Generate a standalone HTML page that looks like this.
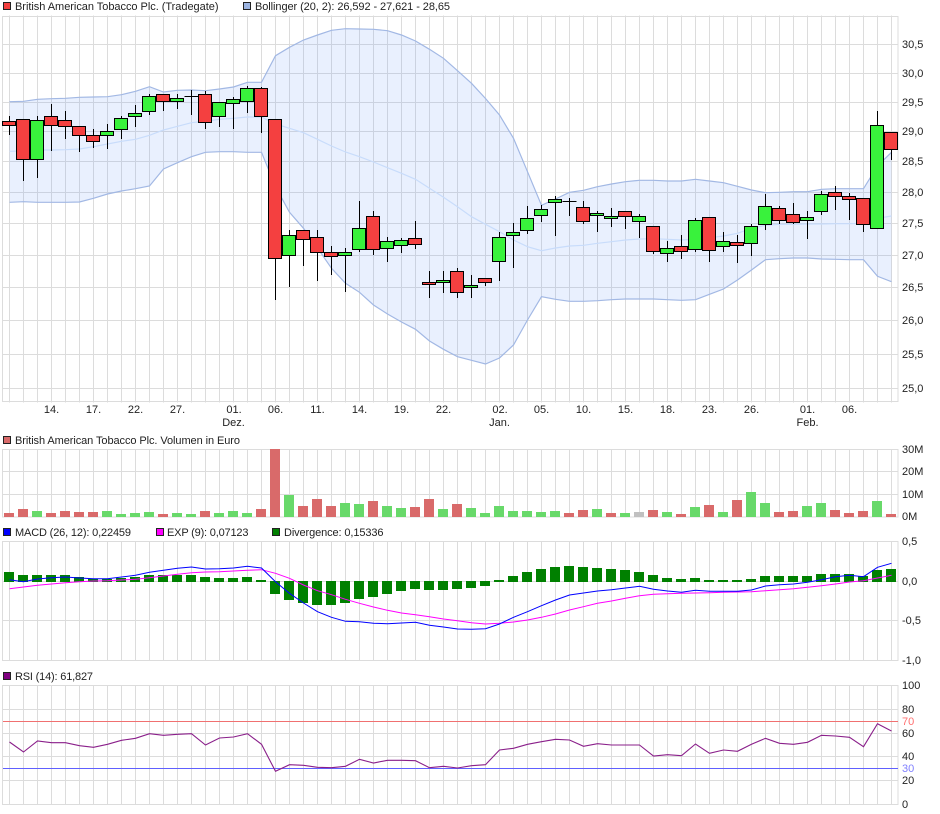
<!DOCTYPE html>
<html><head><meta charset="utf-8"><title>Chart</title>
<style>
html,body{margin:0;padding:0;background:#fff}
svg{display:block}
text{font-family:"Liberation Sans",sans-serif;font-size:11px;fill:#222}
.g{stroke:#dcdcdc;stroke-width:1;fill:none}
.m{text-anchor:middle}
</style></head><body>
<svg width="940" height="814" viewBox="0 0 940 814" xmlns="http://www.w3.org/2000/svg">
<!-- main grid -->
<line x1="9" y1="209" x2="892" y2="209" stroke="#dcdcdc" stroke-width="387" stroke-dasharray="1 13"/>
<rect class="g" x="2.5" y="16.5" width="895.5" height="385"/>
<path class="g" d="M3 44.5H898M3 73.5H898M3 102.5H898M3 131.5H898M3 161.5H898M3 192.5H898M3 223.5H898M3 255.5H898M3 287.5H898M3 320.5H898M3 354.5H898M3 388.5H898"/>
<!-- bollinger -->
<polygon fill="rgb(100,150,250)" fill-opacity=".14" points="9.5,101.7 23.5,101.3 37.5,99.3 51.5,98.7 65.5,98.3 79.5,97.3 93.5,97 107.5,96.7 121.5,94.7 135.5,91.3 149.5,86.7 163.5,92 177.5,90.3 191.5,90 205.5,90.7 219.5,89 233.5,87 247.5,82.3 261.5,82.3 275.5,55.7 289.5,47.3 303.5,40 317.5,35 331.5,30.3 345.5,28.7 359.5,29 373.5,29.3 387.5,30.7 401.5,35 415.5,41 429.5,49.3 443.5,58.3 457.5,70.7 471.5,83.3 485.5,98.5 499.5,115 513.5,138.3 527.5,171.7 541.5,205.3 555.5,199 569.5,192.3 583.5,190.3 597.5,186.7 611.5,184 625.5,181.7 639.5,180.3 653.5,180.3 667.5,181 681.5,181 695.5,179.3 709.5,181 723.5,182.7 737.5,186.3 751.5,190 765.5,192.7 779.5,192.3 793.5,191.7 807.5,191.7 821.5,189.3 835.5,188.7 849.5,188.7 863.5,188.7 877.5,166 891.5,152.3 891.5,281.7 877.5,276.3 863.5,259.7 849.5,259.7 835.5,259.3 821.5,259 807.5,258 793.5,258 779.5,258.7 765.5,259.7 751.5,270 737.5,280 723.5,289 709.5,294.3 695.5,299.7 681.5,300.3 667.5,299.7 653.5,299 639.5,299 625.5,299 611.5,299.7 597.5,300.7 583.5,301.3 569.5,301.3 555.5,299.3 541.5,296.7 527.5,320 513.5,345 499.5,358 485.5,364 471.5,360.3 457.5,356.7 443.5,349.3 429.5,341 415.5,329.3 401.5,322 387.5,314 373.5,305 359.5,292.3 345.5,283.3 331.5,268.3 317.5,248 303.5,228.3 289.5,212.3 275.5,186.7 261.5,152.3 247.5,152.3 233.5,151.7 219.5,151.7 205.5,152.3 191.5,156.7 177.5,162.7 163.5,169 149.5,186 135.5,188.7 121.5,191 107.5,194 93.5,198.3 79.5,202 65.5,202.3 51.5,202.3 37.5,202.3 23.5,201.7 9.5,202.3"/>
<polyline fill="none" stroke="#c8dcfb" stroke-width="1.2" points="9.5,151.3 23.5,151 37.5,150 51.5,150 65.5,149.7 79.5,149 93.5,146.7 107.5,144 121.5,141.3 135.5,139.3 149.5,135.3 163.5,130 177.5,126.3 191.5,122.7 205.5,121.3 219.5,119.3 233.5,118.3 247.5,117 261.5,117 275.5,124 289.5,128.3 303.5,132.7 317.5,139.3 331.5,146 345.5,152 359.5,156.7 373.5,162 387.5,167.7 401.5,173.3 415.5,179.3 429.5,188.3 443.5,197.3 457.5,206.7 471.5,216.7 485.5,224.3 499.5,231.7 513.5,240 527.5,246.7 541.5,250.7 555.5,248 569.5,246 583.5,245.3 597.5,243.3 611.5,241.7 625.5,240 639.5,239 653.5,238.7 667.5,239.3 681.5,240 695.5,239.3 709.5,237.7 723.5,236 737.5,233.3 751.5,228.3 765.5,225.3 779.5,224.3 793.5,224.3 807.5,224 821.5,224 835.5,223.7 849.5,223.7 863.5,223.3 877.5,218.3 891.5,216"/>
<polyline fill="none" stroke="#a2b8e4" stroke-width="1.2" points="9.5,101.7 23.5,101.3 37.5,99.3 51.5,98.7 65.5,98.3 79.5,97.3 93.5,97 107.5,96.7 121.5,94.7 135.5,91.3 149.5,86.7 163.5,92 177.5,90.3 191.5,90 205.5,90.7 219.5,89 233.5,87 247.5,82.3 261.5,82.3 275.5,55.7 289.5,47.3 303.5,40 317.5,35 331.5,30.3 345.5,28.7 359.5,29 373.5,29.3 387.5,30.7 401.5,35 415.5,41 429.5,49.3 443.5,58.3 457.5,70.7 471.5,83.3 485.5,98.5 499.5,115 513.5,138.3 527.5,171.7 541.5,205.3 555.5,199 569.5,192.3 583.5,190.3 597.5,186.7 611.5,184 625.5,181.7 639.5,180.3 653.5,180.3 667.5,181 681.5,181 695.5,179.3 709.5,181 723.5,182.7 737.5,186.3 751.5,190 765.5,192.7 779.5,192.3 793.5,191.7 807.5,191.7 821.5,189.3 835.5,188.7 849.5,188.7 863.5,188.7 877.5,166 891.5,152.3"/>
<polyline fill="none" stroke="#a2b8e4" stroke-width="1.2" points="9.5,202.3 23.5,201.7 37.5,202.3 51.5,202.3 65.5,202.3 79.5,202 93.5,198.3 107.5,194 121.5,191 135.5,188.7 149.5,186 163.5,169 177.5,162.7 191.5,156.7 205.5,152.3 219.5,151.7 233.5,151.7 247.5,152.3 261.5,152.3 275.5,186.7 289.5,212.3 303.5,228.3 317.5,248 331.5,268.3 345.5,283.3 359.5,292.3 373.5,305 387.5,314 401.5,322 415.5,329.3 429.5,341 443.5,349.3 457.5,356.7 471.5,360.3 485.5,364 499.5,358 513.5,345 527.5,320 541.5,296.7 555.5,299.3 569.5,301.3 583.5,301.3 597.5,300.7 611.5,299.7 625.5,299 639.5,299 653.5,299 667.5,299.7 681.5,300.3 695.5,299.7 709.5,294.3 723.5,289 737.5,280 751.5,270 765.5,259.7 779.5,258.7 793.5,258 807.5,258 821.5,259 835.5,259.3 849.5,259.7 863.5,259.7 877.5,276.3 891.5,281.7"/>
<!-- wicks -->
<path fill="none" stroke="#000" stroke-width="1" d="M9.5 116V135M23.5 119V181M37.5 116V178M51.5 104V151M65.5 111V139M79.5 127V152M93.5 129V148M107.5 124V149M121.5 116V139M135.5 105V127M149.5 94V115M163.5 94V111M177.5 94V109M191.5 90V115M205.5 91V129M219.5 102V127M233.5 97V129M247.5 86V113M261.5 87V133M275.5 119V300M289.5 230V287M303.5 230V266M317.5 230V281M331.5 246V275M345.5 248V292M359.5 201V252M373.5 211V255M387.5 237V262M401.5 238V253M415.5 221V249M429.5 271V298M443.5 271V293M457.5 268V298M471.5 275V298M485.5 278V286M499.5 232V281M513.5 223V268M527.5 206V234M541.5 205V222M555.5 196V236M569.5 198V216M583.5 201V224M597.5 211V232M611.5 208V227M625.5 211V229M639.5 214V238M653.5 226V254M667.5 241V262M681.5 235V259M695.5 218V252M709.5 217V262M723.5 232V252M737.5 235V263M751.5 224V256M765.5 194V230M779.5 206V224M793.5 203V224M807.5 211V239M821.5 191V215M835.5 186V210M849.5 193V220M863.5 198V232M877.5 111V228M891.5 132V160M184.5 96.5H198.5M562.5 201.5H576.5"/>
<!-- red bodies -->
<path fill="#f44040" stroke="#000" stroke-width="1" d="M2.5 121.5h13v4h-13zM16.5 119.5h13v40h-13zM44.5 116.5h13v9h-13zM58.5 120.5h13v6h-13zM72.5 126.5h13v9h-13zM86.5 135.5h13v6h-13zM156.5 94.5h13v7h-13zM198.5 94.5h13v28h-13zM254.5 88.5h13v28h-13zM268.5 119.5h13v139h-13zM296.5 230.5h13v9h-13zM310.5 237.5h13v15h-13zM324.5 252.5h13v4h-13zM366.5 216.5h13v33h-13zM408.5 238.5h13v6h-13zM422.5 282.5h13v2h-13zM450.5 271.5h13v21h-13zM478.5 278.5h13v4h-13zM576.5 207.5h13v14h-13zM618.5 211.5h13v5h-13zM646.5 226.5h13v25h-13zM674.5 246.5h13v5h-13zM702.5 217.5h13v33h-13zM730.5 242.5h13v3h-13zM772.5 208.5h13v12h-13zM786.5 214.5h13v8h-13zM828.5 192.5h13v4h-13zM842.5 196.5h13v3h-13zM856.5 198.5h13v26h-13zM884.5 132.5h13v17h-13z"/>
<!-- green bodies -->
<path fill="#39f23c" stroke="#000" stroke-width="1" d="M30.5 120.5h13v39h-13zM100.5 131.5h13v4h-13zM114.5 118.5h13v11h-13zM128.5 113.5h13v3h-13zM142.5 96.5h13v15h-13zM170.5 98.5h13v3h-13zM212.5 102.5h13v14h-13zM226.5 99.5h13v4h-13zM240.5 88.5h13v13h-13zM282.5 235.5h13v20h-13zM338.5 252.5h13v3h-13zM352.5 228.5h13v21h-13zM380.5 241.5h13v7h-13zM394.5 240.5h13v5h-13zM436.5 280.5h13v2h-13zM464.5 285.5h13v2h-13zM492.5 237.5h13v24h-13zM506.5 232.5h13v3h-13zM520.5 218.5h13v12h-13zM534.5 209.5h13v6h-13zM548.5 199.5h13v3h-13zM590.5 213.5h13v2h-13zM604.5 216.5h13v2h-13zM632.5 216.5h13v5h-13zM660.5 248.5h13v5h-13zM688.5 220.5h13v29h-13zM716.5 241.5h13v5h-13zM744.5 226.5h13v17h-13zM758.5 206.5h13v18h-13zM800.5 217.5h13v3h-13zM814.5 194.5h13v17h-13zM870.5 125.5h13v103h-13z"/>
<!-- legends -->
<rect x="3.5" y="2.5" width="7" height="7" fill="#f44040" stroke="#222"/>
<text x="15" y="10" textLength="203.5" lengthAdjust="spacing">British American Tobacco Plc. (Tradegate)</text>
<rect x="243.5" y="2.5" width="7" height="7" fill="#9db5e2" stroke="#222"/>
<text x="255" y="10" textLength="195" lengthAdjust="spacing">Bollinger (20, 2): 26,592 - 27,621 - 28,65</text>
<rect x="3.5" y="436.5" width="7" height="7" fill="#d96a6a" stroke="#222"/>
<text x="15" y="444" textLength="225" lengthAdjust="spacing">British American Tobacco Plc. Volumen in Euro</text>
<rect x="3.5" y="528.5" width="7" height="7" fill="#0000ff" stroke="#222"/>
<text x="15" y="536" textLength="116" lengthAdjust="spacing">MACD (26, 12): 0,22459</text>
<rect x="156.5" y="528.5" width="7" height="7" fill="#ff00ff" stroke="#222"/>
<text x="167" y="536" textLength="81.5" lengthAdjust="spacing">EXP (9): 0,07123</text>
<rect x="272.5" y="528.5" width="7" height="7" fill="#008000" stroke="#222"/>
<text x="284" y="536" textLength="99.5" lengthAdjust="spacing">Divergence: 0,15336</text>
<rect x="3.5" y="672.5" width="7" height="7" fill="#800080" stroke="#222"/>
<text x="15" y="680" textLength="78" lengthAdjust="spacing">RSI (14): 61,827</text>
<!-- y axis main -->
<text x="902" y="48">30,5</text><text x="902" y="77">30,0</text><text x="902" y="106">29,5</text><text x="902" y="135">29,0</text><text x="902" y="165">28,5</text><text x="902" y="196">28,0</text><text x="902" y="227">27,5</text><text x="902" y="259">27,0</text><text x="902" y="291">26,5</text><text x="902" y="324">26,0</text><text x="902" y="358">25,5</text><text x="902" y="392">25,0</text>
<!-- x axis -->
<g class="m">
<text class="m" x="51.5" y="413">14.</text><text class="m" x="93.5" y="413">17.</text><text class="m" x="135.5" y="413">22.</text><text class="m" x="177.5" y="413">27.</text><text class="m" x="234" y="413">01.</text><text class="m" x="233.5" y="426">Dez.</text><text class="m" x="275.5" y="413">06.</text><text class="m" x="317.5" y="413">11.</text><text class="m" x="359.5" y="413">14.</text><text class="m" x="401.5" y="413">19.</text><text class="m" x="443.5" y="413">22.</text><text class="m" x="500" y="413">02.</text><text class="m" x="499.5" y="426">Jan.</text><text class="m" x="541.5" y="413">05.</text><text class="m" x="583.5" y="413">10.</text><text class="m" x="625.5" y="413">15.</text><text class="m" x="667.5" y="413">18.</text><text class="m" x="709.5" y="413">23.</text><text class="m" x="751.5" y="413">26.</text><text class="m" x="807.5" y="413">01.</text><text class="m" x="807.5" y="426">Feb.</text><text class="m" x="849.5" y="413">06.</text>
</g>
<!-- volume panel -->
<line x1="9" y1="483" x2="892" y2="483" stroke="#dcdcdc" stroke-width="68" stroke-dasharray="1 13"/>
<rect class="g" x="2.5" y="449.5" width="895.5" height="67.5"/>
<path class="g" d="M3 471.5H898M3 494.5H898"/>
<path fill="#d96a6a" d="M4 513h10V517h-10zM18 509h10V517h-10zM46 513h10V517h-10zM60 511h10V517h-10zM74 512h10V517h-10zM88 512h10V517h-10zM158 514h10V517h-10zM200 511h10V517h-10zM256 509h10V517h-10zM270 449h10V517h-10zM298 506h10V517h-10zM312 499h10V517h-10zM326 506h10V517h-10zM368 501h10V517h-10zM410 507h10V517h-10zM424 499h10V517h-10zM452 504h10V517h-10zM564 513h10V517h-10zM578 510h10V517h-10zM606 513h10V517h-10zM648 510h10V517h-10zM676 514h10V517h-10zM704 505h10V517h-10zM732 500h10V517h-10zM774 512h10V517h-10zM788 511h10V517h-10zM830 510h10V517h-10zM844 513h10V517h-10zM858 511h10V517h-10zM886 514h10V517h-10z"/>
<path fill="#68d96a" d="M32 511h10V517h-10zM102 511h10V517h-10zM116 514h10V517h-10zM130 513h10V517h-10zM144 512h10V517h-10zM172 513h10V517h-10zM186 514h10V517h-10zM214 513h10V517h-10zM228 511h10V517h-10zM242 513h10V517h-10zM284 495h10V517h-10zM340 503h10V517h-10zM354 504h10V517h-10zM382 506h10V517h-10zM396 508h10V517h-10zM438 509h10V517h-10zM466 508h10V517h-10zM480 513h10V517h-10zM494 506h10V517h-10zM508 511h10V517h-10zM522 511h10V517h-10zM536 512h10V517h-10zM550 511h10V517h-10zM592 509h10V517h-10zM620 513h10V517h-10zM662 512h10V517h-10zM690 507h10V517h-10zM718 512h10V517h-10zM746 492h10V517h-10zM760 503h10V517h-10zM802 506h10V517h-10zM816 503h10V517h-10zM872 501h10V517h-10z"/>
<rect x="634" y="512" width="10" height="5" fill="#c0c0c0"/>
<text x="902" y="453">30M</text><text x="902" y="475">20M</text><text x="902" y="498">10M</text><text x="902" y="520">0M</text>
<!-- macd panel -->
<line x1="9" y1="601" x2="892" y2="601" stroke="#dcdcdc" stroke-width="119" stroke-dasharray="1 13"/>
<rect class="g" x="2.5" y="541.5" width="895.5" height="119"/>
<path class="g" d="M3 581.5H898M3 620.5H898"/>
<path fill="#008000" d="M4 572h10V582h-10zM18 575h10V582h-10zM32 575h10V582h-10zM46 575h10V582h-10zM60 575h10V582h-10zM74 577h10V582h-10zM88 579h10V582h-10zM102 579h10V582h-10zM116 578h10V582h-10zM130 577h10V582h-10zM144 575h10V582h-10zM158 575h10V582h-10zM172 575h10V582h-10zM186 575h10V582h-10zM200 577h10V582h-10zM214 578h10V582h-10zM228 578h10V582h-10zM242 577h10V582h-10zM256 580h10V582h-10zM494 580h10V582h-10zM508 576h10V582h-10zM522 572h10V582h-10zM536 569h10V582h-10zM550 567h10V582h-10zM564 566h10V582h-10zM578 567h10V582h-10zM592 568h10V582h-10zM606 569h10V582h-10zM620 570h10V582h-10zM634 572h10V582h-10zM648 575h10V582h-10zM662 578h10V582h-10zM676 579h10V582h-10zM690 578h10V582h-10zM704 580h10V582h-10zM718 580h10V582h-10zM732 580h10V582h-10zM746 579h10V582h-10zM760 576h10V582h-10zM774 576h10V582h-10zM788 576h10V582h-10zM802 576h10V582h-10zM816 574h10V582h-10zM830 574h10V582h-10zM844 574h10V582h-10zM858 576h10V582h-10zM872 570h10V582h-10zM886 569h10V582h-10zM270 581h10V594h-10zM284 581h10V600h-10zM298 581h10V603h-10zM312 581h10V605h-10zM326 581h10V605h-10zM340 581h10V603h-10zM354 581h10V599h-10zM368 581h10V597h-10zM382 581h10V594h-10zM396 581h10V591h-10zM410 581h10V589h-10zM424 581h10V590h-10zM438 581h10V590h-10zM452 581h10V589h-10zM466 581h10V588h-10zM480 581h10V586h-10z"/>
<polyline fill="none" stroke="#ff00ff" stroke-width="1" points="9.5,588.7 23.5,587 37.5,585.3 51.5,584 65.5,582.7 79.5,581.7 93.5,581 107.5,580.7 121.5,580 135.5,579.3 149.5,577.7 163.5,576 177.5,574.3 191.5,572.7 205.5,572 219.5,571.7 233.5,571 247.5,570.3 261.5,569.7 275.5,573.3 289.5,578.3 303.5,585 317.5,590.7 331.5,594.7 345.5,599.3 359.5,603.3 373.5,607 387.5,610.3 401.5,613 415.5,614.7 429.5,616.7 443.5,619 457.5,620.7 471.5,622.7 485.5,624 499.5,623.3 513.5,622 527.5,620 541.5,617.3 555.5,614 569.5,610 583.5,606.7 597.5,603.3 611.5,601 625.5,598.3 639.5,595.7 653.5,594.3 667.5,593.7 681.5,593.3 695.5,593 709.5,592.7 723.5,592.3 737.5,592 751.5,591.7 765.5,590.7 779.5,589.7 793.5,588.7 807.5,587.3 821.5,585.7 835.5,584 849.5,582 863.5,580.7 877.5,578 891.5,575.3"/>
<polyline fill="none" stroke="#0000ff" stroke-width="1" points="9.5,579.7 23.5,581.7 37.5,579 51.5,577.7 65.5,577 79.5,578 93.5,578.7 107.5,578.7 121.5,577 135.5,575.3 149.5,572.3 163.5,570.3 177.5,568.3 191.5,567 205.5,569 219.5,568.7 233.5,568 247.5,566.3 261.5,568 275.5,581.7 289.5,593.3 303.5,603 317.5,611.7 331.5,617.3 345.5,621.3 359.5,621.7 373.5,623.3 387.5,623.7 401.5,623 415.5,622.3 429.5,625.3 443.5,627 457.5,629 471.5,629.3 485.5,628.7 499.5,624 513.5,617.3 527.5,611.7 541.5,605.7 555.5,600 569.5,595 583.5,593 597.5,591 611.5,589.7 625.5,588 639.5,586.3 653.5,589.3 667.5,591 681.5,592.3 695.5,590.3 709.5,591.3 723.5,591.3 737.5,591.3 751.5,590 765.5,586 779.5,584.7 793.5,584 807.5,582.3 821.5,579.7 835.5,576.7 849.5,575.3 863.5,576.7 877.5,567.3 891.5,563.3"/>
<text x="902" y="545">0,5</text><text x="902" y="585">0,0</text><text x="902" y="624">-0,5</text><text x="902" y="664">-1,0</text>
<!-- rsi panel -->
<line x1="9" y1="745" x2="892" y2="745" stroke="#dcdcdc" stroke-width="119" stroke-dasharray="1 13"/>
<rect class="g" x="2.5" y="685.5" width="895.5" height="119"/>
<path class="g" d="M3 709.5H898M3 733.5H898M3 756.5H898M3 780.5H898"/>
<line x1="3" y1="721.5" x2="898" y2="721.5" stroke="#f07070"/>
<line x1="3" y1="768.5" x2="898" y2="768.5" stroke="#6060ff"/>
<polyline fill="none" stroke="#8a1f8a" stroke-width="1.1" points="9.5,742 23.5,752 37.5,741 51.5,742.7 65.5,742.7 79.5,745.7 93.5,747.3 107.5,744.3 121.5,740.3 135.5,738.3 149.5,733.7 163.5,735.3 177.5,734.3 191.5,733.7 205.5,745 219.5,738 233.5,737 247.5,733.7 261.5,744.3 275.5,771.3 289.5,764.7 303.5,765.3 317.5,767.3 331.5,767.7 345.5,766.3 359.5,759.3 373.5,763 387.5,760.3 401.5,760.3 415.5,760.7 429.5,767.7 443.5,766.3 457.5,768 471.5,765.7 485.5,764.7 499.5,750 513.5,748.3 527.5,744.3 541.5,741.7 555.5,739.3 569.5,740 583.5,746.3 597.5,743.7 611.5,745 625.5,745 639.5,745 653.5,756 667.5,754.7 681.5,755.7 695.5,744 709.5,753.3 723.5,750 737.5,751.3 751.5,744.3 765.5,738.3 779.5,743.3 793.5,744.3 807.5,742.3 821.5,735.3 835.5,736 849.5,737.3 863.5,746.7 877.5,723.7 891.5,731"/>
<text x="902" y="689">100</text><text x="902" y="713">80</text><text x="902" y="725" style="fill:#ff7070">70</text><text x="902" y="737">60</text><text x="902" y="760">40</text><text x="902" y="772" style="fill:#8080ff">30</text><text x="902" y="784">20</text><text x="902" y="808">0</text>
</svg>
</body></html>
